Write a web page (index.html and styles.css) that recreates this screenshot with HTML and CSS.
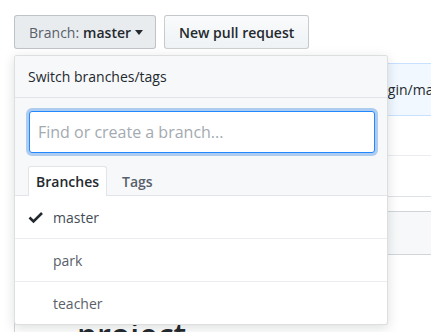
FILE: index.html
```html
<!DOCTYPE html>
<html lang="en">
<head>
    <meta charset="UTF-8">
    <meta name="viewport" content="width=device-width, initial-scale=1.0">
    <title>branches</title>
    <link rel="stylesheet" href="styles.css">
</head>
<body>
    <div class="page">
        <div class="toolbar">
            <button class="btn btn-branch">
                <span class="label">Branch:</span> <span class="current">master</span>
                <span class="caret"></span>
            </button>
            <button class="btn">New pull request</button>
        </div>

        <div class="commit-tease">
            <span class="message">Merge remote-tracking branch 'origin/master'</span>
        </div>
        <div class="files">
            <div class="file-row"></div>
            <div class="file-row"></div>
        </div>

        <div class="readme">
            <div class="readme-head"></div>
            <div class="readme-body">
                <h1>project</h1>
            </div>
        </div>

        <!-- branch menu, open -->
        <div class="select-menu">
            <div class="menu-title">Switch branches/tags</div>
            <div class="menu-filter">
                <input class="filter-input" type="text" placeholder="Find or create a branch..." autofocus>
                <div class="tabs">
                    <span class="tab selected">Branches</span>
                    <span class="tab">Tags</span>
                </div>
            </div>
            <div class="menu-list">
                <div class="menu-item active">
                    <svg class="check" width="16" height="16" viewBox="0 0 16 16"><path d="M1.5 8.5 L5.5 12.5 L14 4" fill="none" stroke="#24292e" stroke-width="2.6"/></svg>
                    <span>master</span>
                </div>
                <div class="menu-item"><span>park</span></div>
                <div class="menu-item"><span>teacher</span></div>
            </div>
        </div>
    </div>
</body>
</html>
```

FILE: styles.css
```css
*{
    margin: 0;
    padding: 0;
    box-sizing: border-box;
    font-family: "Open Sans", "Noto Sans", sans-serif;
}

body{
    background: #fff;
    color: #24292e;
    overflow: hidden;
}

.page{
    position: relative;
    width: 700px;
    height: 332px;
    padding: 0 14px;
}

.toolbar{
    display: flex;
    gap: 8px;
    padding-top: 15px;
}

.btn{
    display: flex;
    align-items: center;
    height: 34px;
    padding: 0 14px;
    font-size: 14px;
    font-weight: 600;
    color: #24292e;
    background: linear-gradient(-180deg, #fafbfc, #eff3f6 90%);
    border: 1px solid rgba(27, 31, 35, 0.2);
    border-radius: 3px;
}

.btn-branch{
    background: #e9ecef;
    width: 142px;
}

.btn-branch .label{
    color: #586069;
    font-weight: 400;
    margin-right: 4px;
}

.caret{
    margin-left: 4px;
    border-top: 5px solid #24292e;
    border-left: 4.5px solid transparent;
    border-right: 4.5px solid transparent;
}

.commit-tease{
    margin-top: 14px;
    height: 53px;
    background: #f1f8ff;
    border: 1px solid #c8e1ff;
    border-radius: 3px 3px 0 0;
    display: flex;
    align-items: center;
    padding-left: 149px;
    font-size: 14px;
}

.files{
    border: 1px solid #dfe2e5;
    border-top: 0;
}

.file-row{
    height: 40px;
    border-bottom: 1px solid #eaecef;
}

.file-row:last-child{
    border-bottom: 0;
}

.readme{
    margin-top: 14px;
    border: 1px solid #d1d5da;
}

.readme-head{
    height: 43px;
    background: #f6f8fa;
    border-bottom: 1px solid #d1d5da;
}

.readme-body{
    padding: 60px 0 0 62px;
}

.readme-body h1{
    font-size: 32px;
    font-weight: 600;
    line-height: 40px;
}

.select-menu{
    position: absolute;
    top: 55px;
    left: 14px;
    width: 374px;
    background: #fff;
    border: 1px solid rgba(27, 31, 35, 0.15);
    border-radius: 3px;
    box-shadow: 0 3px 12px rgba(27, 31, 35, 0.15);
    overflow: hidden;
}

.menu-title{
    height: 42px;
    display: flex;
    align-items: center;
    padding-left: 13px;
    font-size: 14px;
    background: #f6f8fa;
    border-bottom: 1px solid #e1e4e8;
}

.menu-filter{
    background: #f6f8fa;
    padding: 13px 12px 0 14px;
    border-bottom: 1px solid #e1e4e8;
}

.filter-input{
    display: block;
    width: 100%;
    height: 42px;
    padding: 0 8px;
    font-size: 16px;
    color: #24292e;
    background: #fff;
    border: 1px solid #2188ff;
    border-radius: 3px;
    outline: none;
    box-shadow: 0 0 0 3px rgba(3, 102, 214, 0.3);
    caret-color: #24292e;
}

.filter-input::placeholder{
    color: #a3aab1;
}

.tabs{
    display: flex;
    margin-top: 13px;
    margin-bottom: -1px;
}

.tab{
    height: 30px;
    display: flex;
    align-items: center;
    padding: 0 12px;
    font-size: 14px;
    font-weight: 600;
    color: #586069;
    border: 1px solid transparent;
    border-bottom: 0;
    border-radius: 3px 3px 0 0;
    margin-left: -1px;
}

.tab.selected{
    color: #24292e;
    background: #fff;
    border-color: #e1e4e8;
    padding: 0 7px;
}

.tab + .tab{
    padding-left: 15px;
}

.menu-item{
    height: 43px;
    display: flex;
    align-items: center;
    padding-left: 38px;
    font-size: 14px;
    color: #586069;
    border-bottom: 1px solid #eaecef;
}

.menu-item:last-child{
    border-bottom: 0;
    height: 42px;
}

.menu-item.active{
    padding-left: 13px;
    color: #444d56;
}

.check{
    margin-right: 9px;
}
```
